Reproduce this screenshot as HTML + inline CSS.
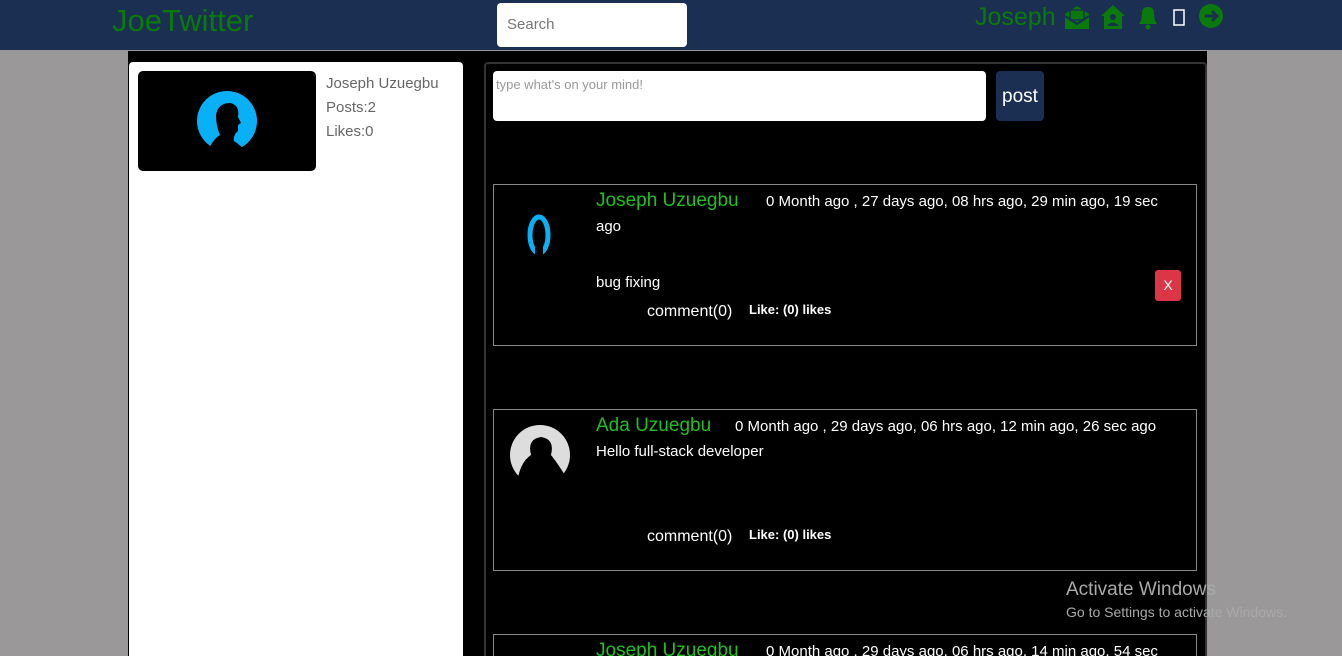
<!DOCTYPE html>
<html><head><meta charset="utf-8"><style>
*{margin:0;padding:0;box-sizing:border-box}
html,body{width:1342px;height:656px;overflow:hidden}
body{background:#9a9898;font-family:"Liberation Sans",sans-serif;position:relative}
.hdr{position:absolute;left:0;top:0;width:1342px;height:50px;background:#1a2f52}
.logo{position:absolute;left:112px;top:3px;font-size:31px;color:#0a7a0a;font-weight:300}
.search{position:absolute;left:497px;top:3px;width:190px;height:44px;background:#fff;border-radius:4px;font-size:15px;color:#777;padding:13px 10px}
.user{position:absolute;left:975px;top:3px;font-size:25px;color:#0a7a0a}
.main{position:absolute;left:128px;top:51px;width:1079px;height:605px;background:#000}
.card{position:absolute;left:129px;top:62px;width:334px;height:594px;background:#fff;border-radius:4px 4px 0 0}
.pic{position:absolute;left:138px;top:71px;width:178px;height:100px;background:#000;border-radius:5px}
.info{position:absolute;left:326px;top:72px;font-size:15px;color:#666;line-height:24px}
.panel{position:absolute;left:484px;top:62px;width:723px;height:594px;border:2px solid #333;border-bottom:none;border-radius:4px 4px 0 0;background:#000}
.ta{position:absolute;left:493px;top:71px;width:493px;height:50px;background:#fff;border-radius:4px;font-size:13px;color:#999;padding:6px 3px}
.post{position:absolute;left:996px;top:71px;width:48px;height:50px;background:#1a2f52;border-radius:4px;color:#fff;font-size:19px;text-align:center;line-height:52px}
.p{position:absolute;left:493px;width:704px;height:162px;border:1px solid #888}
.nm{position:absolute;left:102px;top:5px;color:#1fc01f;font-size:19px}
.t{position:absolute;color:#fff;font-size:16px}
.b{position:absolute;color:#fff;font-size:13px;font-weight:bold}
.x{position:absolute;left:661px;top:85px;width:26px;height:31px;background:#dc3545;border-radius:3px;color:#fff;font-size:14px;text-align:center;line-height:31px}
.act{position:absolute;left:1066px;top:579px;color:#aaa;font-size:19px}
.act2{position:absolute;left:1066px;top:604px;color:#aaa;font-size:14px}
</style></head><body>
<div class="hdr">
<div class="logo">JoeTwitter</div>
<div class="search">Search</div>
<div class="user">Joseph</div>
<svg style="position:absolute;left:1064px;top:4px" width="160" height="26" viewBox="0 0 160 26">
<g fill="#0a7a0a">
<path d="M1 10 L13 2 L25 10 V25 H1Z"/><rect x="6" y="6" width="14" height="10" fill="#0a7a0a" stroke="#1a2f52" stroke-width="1.5"/>
<path d="M1 12 L13 20 L25 12" fill="none" stroke="#1a2f52" stroke-width="2"/>
<path d="M37 12 L49 1 L61 12 H58 V25 H40 V12Z"/><circle cx="49" cy="13" r="3" fill="#1a2f52"/><path d="M43 22 Q49 15 55 22Z" fill="#1a2f52"/>
<path d="M75 20 Q78 16 78 9 Q78 3 84 3 Q90 3 90 9 Q90 16 93 20Z"/><circle cx="84" cy="23" r="2.5"/>
<circle cx="147" cy="12" r="12"/><path d="M141 12 H152 M148 7 L153 12 L148 17" stroke="#1a2f52" stroke-width="3" fill="none"/>
</g>
<rect x="110" y="6" width="10" height="15" fill="none" stroke="#fff" stroke-width="1.5"/>
</svg>
</div>
<div class="main"></div>
<div class="card"></div>
<div class="pic"><svg width="178" height="100"><circle cx="89" cy="50" r="30" fill="#0ab0f5"/><path d="M70 80 Q75 68 82 64 Q78 55 78 44 Q80 32 92 32 Q102 34 100 46 L103 52 L100 54 L100 60 Q95 64 96 70 Q102 74 110 82Z" fill="#000"/></svg></div>
<div class="info"><div>Joseph Uzuegbu</div><div>Posts:2</div><div>Likes:0</div></div>
<div class="panel"></div>
<div class="ta">type what's on your mind!</div>
<div class="post">post</div>

<div class="p" style="top:184px">
<svg style="position:absolute;left:30px;top:28px" width="30" height="48"><ellipse cx="15" cy="22" rx="9" ry="18" fill="none" stroke="#0ab0f5" stroke-width="5"/><rect x="11" y="20" width="8" height="28" fill="#000"/></svg>
<div class="nm">Joseph Uzuegbu</div>
<div class="t" style="left:272px;top:8px;font-size:15px">0 Month ago , 27 days ago, 08 hrs ago, 29 min ago, 19 sec</div>
<div class="t" style="left:102px;top:33px;font-size:15px">ago</div>
<div class="t" style="left:102px;top:89px;font-size:15px">bug fixing</div>
<div class="t" style="left:153px;top:118px">comment(0)</div>
<div class="b" style="left:255px;top:117px">Like: (0) likes</div>
<div class="x">X</div>
</div>

<div class="p" style="top:409px">
<svg style="position:absolute;left:15px;top:15px" width="62" height="60"><circle cx="31" cy="30" r="30" fill="#ddd"/><path d="M8 60 Q10 38 22 30 Q18 14 32 12 Q46 14 42 30 Q50 40 62 60Z" fill="#000"/></svg>
<div class="nm">Ada Uzuegbu</div>
<div class="t" style="left:241px;top:8px;font-size:15px">0 Month ago , 29 days ago, 06 hrs ago, 12 min ago, 26 sec ago</div>
<div class="t" style="left:102px;top:33px;font-size:15px">Hello full-stack developer</div>
<div class="t" style="left:153px;top:118px">comment(0)</div>
<div class="b" style="left:255px;top:117px">Like: (0) likes</div>
</div>

<div class="p" style="top:634px;height:22px;border-bottom:none">
<div class="nm">Joseph Uzuegbu</div>
<div class="t" style="left:272px;top:8px;font-size:15px">0 Month ago , 29 days ago, 06 hrs ago, 14 min ago, 54 sec</div>
</div>
<div class="act">Activate Windows</div>
<div class="act2">Go to Settings to activate Windows.</div>
</body></html>
